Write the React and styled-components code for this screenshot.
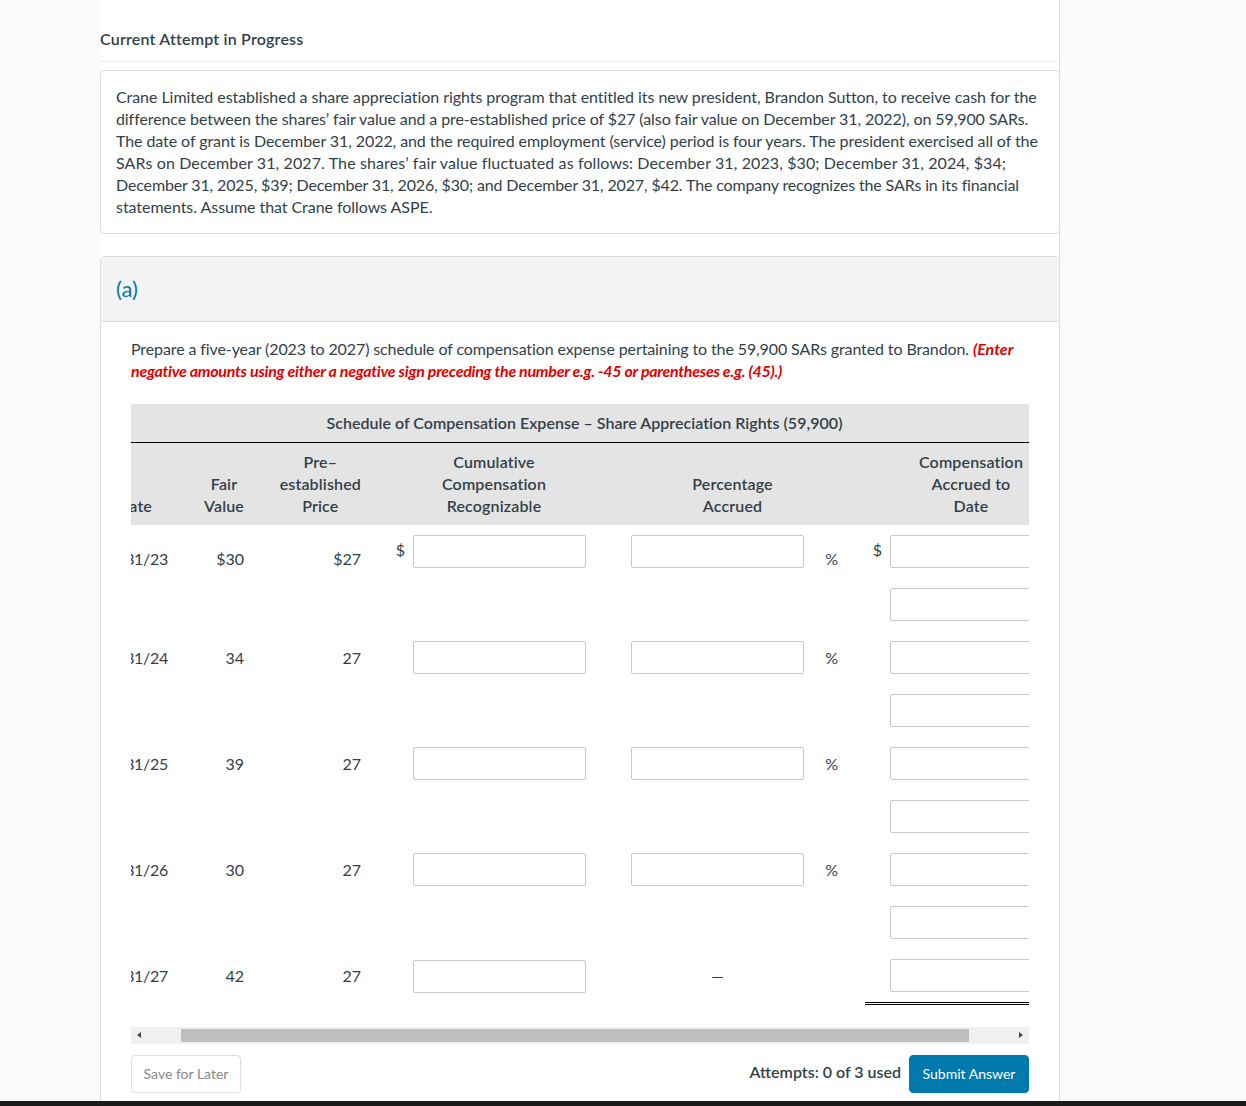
import styled, { createGlobalStyle } from 'styled-components'

const GlobalStyle = createGlobalStyle`
  html, body {
    margin: 0;
    padding: 0;
    background: #fafafa;
  }
  body {
    font-family: Lato, "Open Sans", sans-serif;
    font-size: 16px;
    line-height: 22px;
    color: #333f48;
  }
`

const Page = styled.div`
  height: 1106px;
  display: flex;
  flex-direction: column;
  overflow: hidden;
`

const Column = styled.main`
  box-sizing: border-box;
  width: 960px;
  margin-left: 100px;
  flex: 1;
  min-height: 0;
  overflow: hidden;
  background: #fff;
  border-right: 1px solid #ddd;
`

const Heading = styled.h2`
  margin: 0 0 8px;
  padding: 28px 0 11px;
  font-size: 16px;
  line-height: 22px;
  font-weight: 600;
  letter-spacing: 0.2px;
  border-bottom: 1px solid #eee;
`

const Problem = styled.div`
  box-sizing: border-box;
  width: 960px;
  margin: 0 0 22px;
  padding: 15px;
  background: #fff;
  border: 1px solid #ddd;
  border-radius: 4px;
`

const Line = styled.div`
  white-space: nowrap;
  letter-spacing: ${p => p.$track || '-0.1px'};
`

const Section = styled.section`
  box-sizing: border-box;
  width: 960px;
  border: 1px solid #ddd;
  border-radius: 4px 4px 0 0;
`

const SectionHead = styled.div`
  height: 64px;
  padding-left: 15px;
  display: flex;
  align-items: center;
  background: #f4f4f4;
  border-bottom: 1px solid #ddd;
  color: #0079ac;
  font-size: 22px;
`

const SectionBody = styled.div`
  padding: 16px 30px 24px;
`

const Question = styled.div`
  margin: 0 0 22px;
`

const Red = styled.strong`
  color: #e00000;
  font-style: italic;
  font-weight: 700;
  letter-spacing: ${p => p.$track || '0'};
`

const TableClip = styled.div`
  width: 898px;
  overflow: hidden;
`

const TableTitle = styled.div`
  height: 38px;
  padding-left: 9px;
  line-height: 38px;
  text-align: center;
  font-weight: 600;
  letter-spacing: 0.03px;
  background: #e4e4e4;
  border-bottom: 1px solid #000;
`

const Scrolled = styled.div`
  width: 968px;
  margin-left: -36px;
`

const cols = '73px 76px 117px 52px 173px 45px 173px 34px 52px 173px'

const HeadRow = styled.div`
  display: grid;
  grid-template-columns: ${cols};
  box-sizing: border-box;
  height: 82px;
  padding: 8px 0;
  background: #e4e4e4;
  font-weight: 600;
  letter-spacing: 0.15px;
  text-align: center;
`

const HeadCell = styled.div`
  grid-column: ${p => p.$col};
  align-self: end;
  justify-self: ${p => (p.$right ? 'end' : 'stretch')};
  padding-left: ${p => (p.$wide ? '41px' : '0')};
  padding-right: ${p => p.$inset || '0'};
`

const Row = styled.div`
  display: grid;
  grid-template-columns: ${cols};
  grid-template-rows: 33px 33px;
  row-gap: 20px;
  padding: ${p => (p.$first ? '10px' : '0')} 0 20px;
`

const LastRow = styled(Row)`
  grid-template-rows: 33px;
  padding: 1px 0 0;
`

const Value = styled.div`
  grid-column: ${p => p.$col};
  grid-row: 1;
  margin-top: ${p => p.$top || '6px'};
  text-align: ${p => p.$align || 'right'};
  white-space: nowrap;
`

const DateValue = styled(Value)`
  letter-spacing: -0.3px;
`

const Dollar = styled.div`
  grid-column: ${p => p.$col};
  grid-row: 1;
  margin: 4px 8px 0 0;
  text-align: right;
`

const Field = styled.input`
  grid-column: ${p => p.$col};
  grid-row: ${p => p.$row || 1};
  margin-top: ${p => (p.$raised ? '-1px' : '0')};
  box-sizing: border-box;
  width: 100%;
  height: 33px;
  padding: 0 6px;
  background: #fff;
  border: 1px solid #c8c8c8;
  border-radius: 2px;
  outline: none;
`

const DoubleRule = styled.div`
  width: 198px;
  height: 0;
  margin: 9px 0 22px 770px;
  border-bottom: 3px double #000;
`

const ScrollTrack = styled.div`
  box-sizing: border-box;
  height: 17px;
  padding: 2px 0;
  position: relative;
  background: #f0f0f0;
`

const ScrollThumb = styled.div`
  width: 788px;
  height: 13px;
  margin-left: 50px;
  background: #bebebe;
`

const Arrow = styled.span`
  position: absolute;
  top: 5px;
  ${p => (p.$right ? 'right: 6px' : 'left: 6px')};
  border-style: solid;
  border-color: transparent;
  border-width: 3.5px 0;
  ${p => (p.$right ? 'border-left: 4px solid #444' : 'border-right: 4px solid #444')};
`

const Footer = styled.div`
  width: 898px;
  margin-top: 11px;
  display: flex;
  align-items: center;
  justify-content: space-between;
`

const Actions = styled.div`
  display: flex;
  align-items: center;
  gap: 8px;
`

const Attempts = styled.span`
  font-weight: 600;
  margin-top: -4px;
`

const Button = styled.button`
  box-sizing: border-box;
  height: 38px;
  padding: 0 0 2px;
  font-family: Lato, "Open Sans", sans-serif;
  font-size: 14px;
  border-radius: 4px;
  cursor: pointer;
`

const SaveButton = styled(Button)`
  width: 110px;
  background: #fff;
  color: #888;
  border: 1px solid #ddd;
`

const SubmitButton = styled(Button)`
  width: 120px;
  background: #0079ac;
  color: #fff;
  border: 1px solid #0079ac;
`

const BottomBar = styled.div`
  height: 5px;
  flex: none;
  background: #1a1a1a;
`

const rows = [
  { date: '12/31/23', fair: '$30', price: '$27', first: true },
  { date: '12/31/24', fair: '34', price: '27' },
  { date: '12/31/25', fair: '39', price: '27' },
  { date: '12/31/26', fair: '30', price: '27' },
]

export default function App() {
  return (
    <Page>
      <GlobalStyle />
      <Column>
        <Heading>Current Attempt in Progress</Heading>
        <Problem>
          <Line $track="-0.055px">Crane Limited established a share appreciation rights program that entitled its new president, Brandon Sutton, to receive cash for the</Line>
          <Line $track="-0.09px">difference between the shares’ fair value and a pre-established price of $27 (also fair value on December 31, 2022), on 59,900 SARs.</Line>
          <Line $track="-0.08px">The date of grant is December 31, 2022, and the required employment (service) period is four years. The president exercised all of the</Line>
          <Line $track="0.11px">SARs on December 31, 2027. The shares’ fair value fluctuated as follows: December 31, 2023, $30; December 31, 2024, $34;</Line>
          <Line $track="-0.14px">December 31, 2025, $39; December 31, 2026, $30; and December 31, 2027, $42. The company recognizes the SARs in its financial</Line>
          <Line $track="-0.05px">statements. Assume that Crane follows ASPE.</Line>
        </Problem>
        <Section>
          <SectionHead>(a)</SectionHead>
          <SectionBody>
            <Question>
              <Line $track="-0.11px">Prepare a five-year (2023 to 2027) schedule of compensation expense pertaining to the 59,900 SARs granted to Brandon. <Red>(Enter</Red></Line>
              <Line><Red $track="-0.28px">negative amounts using either a negative sign preceding the number e.g. -45 or parentheses e.g. (45).)</Red></Line>
            </Question>
            <TableClip>
              <TableTitle>Schedule of Compensation Expense – Share Appreciation Rights (59,900)</TableTitle>
              <Scrolled>
                <HeadRow>
                  <HeadCell $col="1" $right $inset="16px">Date</HeadCell>
                  <HeadCell $col="2" $right>Fair<br />Value</HeadCell>
                  <HeadCell $col="3" $right>Pre–<br />established<br />Price</HeadCell>
                  <HeadCell $col="4 / span 2" $wide>Cumulative<br />Compensation<br />Recognizable</HeadCell>
                  <HeadCell $col="6 / span 3" $wide>Percentage<br />Accrued</HeadCell>
                  <HeadCell $col="9 / span 2" $wide>Compensation<br />Accrued to<br />Date</HeadCell>
                </HeadRow>
                {rows.map(r => {
                  const top = r.first ? '13px' : '6px'
                  return (
                    <Row key={r.date} $first={r.first}>
                      <DateValue $col="1" $top={top}>{r.date}</DateValue>
                      <Value $col="2" $top={top}>{r.fair}</Value>
                      <Value $col="3" $top={top}>{r.price}</Value>
                      {r.first && <Dollar $col="4">$</Dollar>}
                      <Field $col="5" />
                      <Field $col="7" />
                      <Value $col="8" $top={top}>%</Value>
                      {r.first && <Dollar $col="9">$</Dollar>}
                      <Field $col="10" />
                      <Field $col="10" $row="2" />
                    </Row>
                  )
                })}
                <LastRow>
                  <DateValue $col="1" $top="5px">12/31/27</DateValue>
                  <Value $col="2" $top="5px">42</Value>
                  <Value $col="3" $top="5px">27</Value>
                  <Field $col="5" />
                  <Value $col="7" $top="5px" $align="center">—</Value>
                  <Field $col="10" $raised />
                </LastRow>
                <DoubleRule />
              </Scrolled>
              <ScrollTrack>
                <Arrow />
                <ScrollThumb />
                <Arrow $right />
              </ScrollTrack>
            </TableClip>
            <Footer>
              <SaveButton>Save for Later</SaveButton>
              <Actions>
                <Attempts>Attempts: 0 of 3 used</Attempts>
                <SubmitButton>Submit Answer</SubmitButton>
              </Actions>
            </Footer>
          </SectionBody>
        </Section>
      </Column>
      <BottomBar />
    </Page>
  )
}
